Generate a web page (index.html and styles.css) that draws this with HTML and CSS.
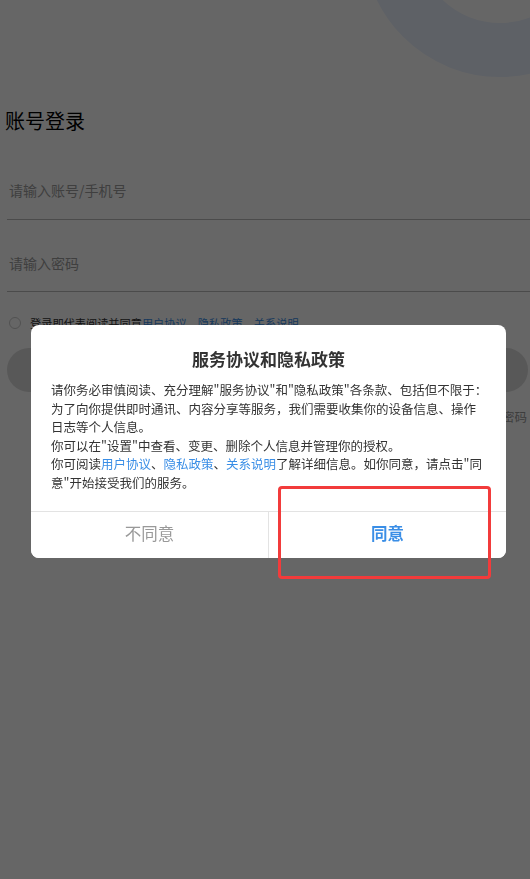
FILE: index.html
```html
<!DOCTYPE html>
<html lang="zh-CN">

<head>
    <meta charset="UTF-8">
    <meta name="viewport" content="width=device-width, initial-scale=1.0">
    <title>账号登录</title>
    <link rel="stylesheet" href="styles.css">
</head>

<body>

    <div class="page">
        <div class="ring"></div>
        <h1 class="title">账号登录</h1>
        <div class="field field-first">
            <input type="text" placeholder="请输入账号/手机号">
        </div>
        <div class="field field-second">
            <input type="password" placeholder="请输入密码">
        </div>
        <div class="agree">
            <span class="check"></span>
            <span>登录即代表阅读并同意<a href="#">用户协议</a>、<a href="#">隐私政策</a>、<a href="#">关系说明</a></span>
        </div>
        <button class="login-btn">登录</button>
        <div class="forgot">忘记密码</div>
    </div>

    <div class="mask">
        <div class="dialog">
            <div class="dialog-title">服务协议和隐私政策</div>
            <div class="dialog-body">
                <p>请你务必审慎阅读、充分理解"服务协议"和"隐私政策"各条款、包括但不限于：<br>为了向你提供即时通讯、内容分享等服务，我们需要收集你的设备信息、操作<br>日志等个人信息。</p>
                <p>你可以在"设置"中查看、变更、删除个人信息并管理你的授权。</p>
                <p>你可阅读<a href="#">用户协议</a>、<a href="#">隐私政策</a>、<a href="#">关系说明</a>了解详细信息。如你同意，请点击"同<br>意"开始接受我们的服务。</p>
            </div>
            <div class="dialog-actions">
                <button class="disagree">不同意</button>
                <button class="confirm">同意</button>
            </div>
        </div>
        <!-- highlight box drawn over the agree button -->
        <div class="highlight"></div>
    </div>

</body>

</html>
```

FILE: styles.css
```css
body {
    margin: 0;
    font-family: 'Noto Sans CJK SC', 'Noto Sans', sans-serif;
    background-color: #fff;
    overflow: hidden;
}

.page {
    position: relative;
    height: 879px;
    padding-top: 107px;
    box-sizing: border-box;
    overflow: hidden;
}

/* decorative ring in the top right corner */
.ring {
    position: absolute;
    left: 363px;
    top: -197px;
    width: 274px;
    height: 274px;
    box-sizing: border-box;
    border: 54px solid #ebf2ff;
    border-radius: 50%;
}

.title {
    margin: 0 0 0 5px;
    font-size: 20px;
    line-height: 28px;
    font-weight: normal;
    color: #000;
}

.field {
    margin-left: 7px;
    border-bottom: 1px solid #bbb;
}

.field-first {
    padding: 45px 0 19px 2px;
}

.field-second {
    padding: 33px 0 18px 2px;
}

.field input {
    display: block;
    width: 100%;
    height: 20px;
    padding: 0;
    border: none;
    outline: none;
    font-family: inherit;
    font-size: 14px;
    line-height: 20px;
    background: transparent;
}

.field input::placeholder {
    color: #9d9d9d;
}

.agree {
    display: flex;
    align-items: center;
    gap: 9px;
    margin: 23px 0 0 9px;
    font-size: 11.2px;
    line-height: 16px;
    color: #333;
}

.check {
    width: 12px;
    height: 12px;
    box-sizing: border-box;
    border: 1px solid #ccc;
    border-radius: 50%;
}

.agree a {
    color: #3a8ee6;
    text-decoration: none;
}

.login-btn {
    display: block;
    width: calc(100% - 9px);
    height: 44px;
    margin: 17px 0 0 7px;
    border: none;
    border-radius: 22px;
    background-color: #dcdcdc;
    color: #fff;
    font-family: inherit;
    font-size: 16px;
}

.forgot {
    margin: 17px 3px 0 0;
    text-align: right;
    font-size: 12.5px;
    line-height: 16px;
    color: #999;
}

.mask {
    position: fixed;
    top: 0;
    left: 0;
    right: 0;
    bottom: 0;
    background-color: rgba(0, 0, 0, 0.6);
    padding: 325px 0 0 31px;
}

.dialog {
    width: 475px;
    background-color: #fff;
    border-radius: 8px;
    overflow: hidden;
}

.dialog-title {
    padding-top: 22px;
    font-size: 17px;
    line-height: 24px;
    font-weight: bold;
    text-align: center;
    color: #333;
}

.dialog-body {
    padding: 10px 8px 18px 20px;
    font-size: 12.5px;
    line-height: 18.6px;
    color: #333;
}

.dialog-body p {
    margin: 0;
}

.dialog-body a {
    color: #3a8ee6;
    text-decoration: none;
}

.dialog-actions {
    display: flex;
    border-top: 1px solid #e3e3e3;
}

.dialog-actions button {
    flex: 1;
    height: 46px;
    padding: 0 0 3px 0;
    border: none;
    background: #fff;
    font-family: inherit;
    font-size: 16.5px;
}

.disagree {
    color: #999;
    border-right: 1px solid #e3e3e3 !important;
}

.confirm {
    color: #3a8ee6;
    font-weight: bold;
}

.highlight {
    position: absolute;
    left: 278px;
    top: 486px;
    width: 213px;
    height: 93px;
    box-sizing: border-box;
    border: 3px solid #f23b3b;
    border-radius: 4px;
}
```
